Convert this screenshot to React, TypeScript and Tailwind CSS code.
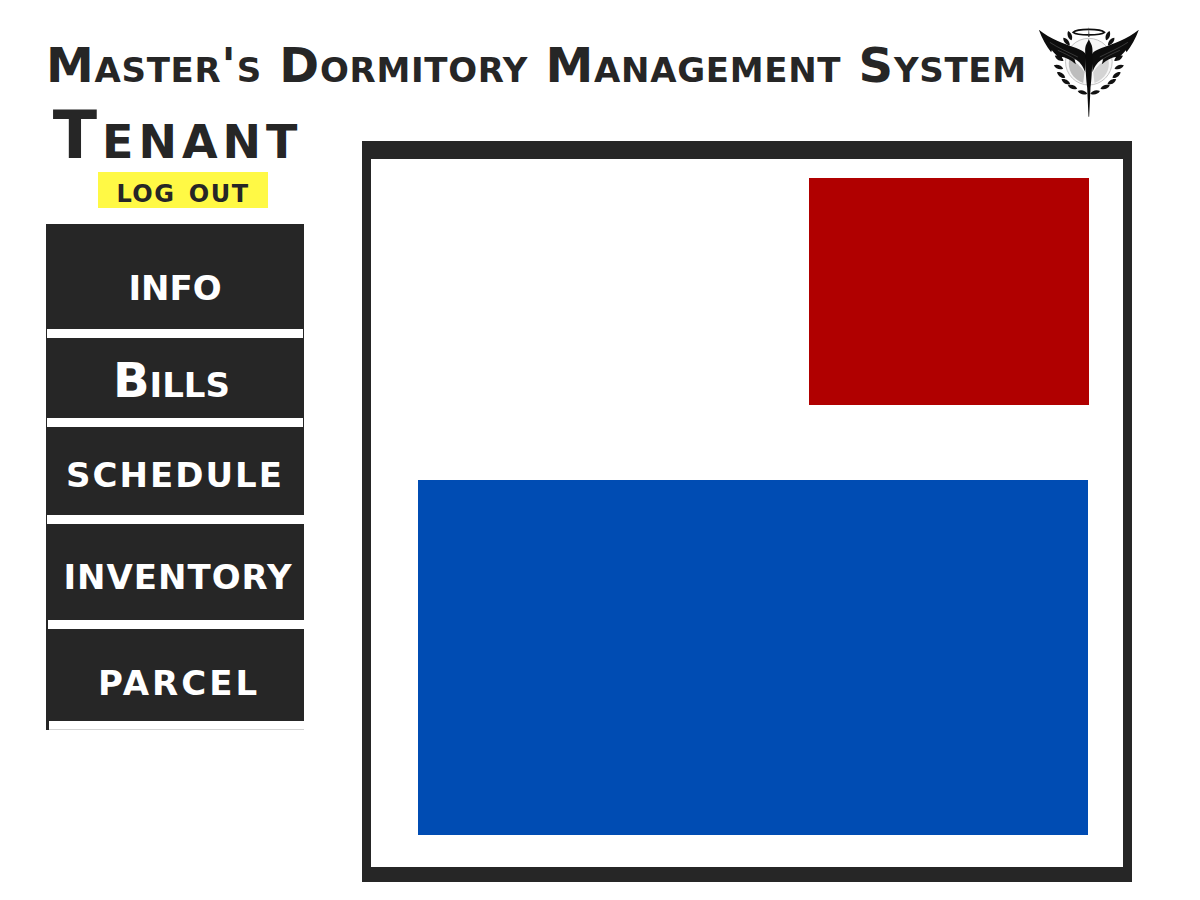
const navItems = [
  { label: 'info', box: 'h-[105px] pt-[12px]', gap: 'ml-[1px] mr-[1px]' },
  { label: 'Bills', box: 'h-[80px] pt-[3px] pr-[7px]', gap: 'ml-[1px] mr-[1px]' },
  { label: 'schedule', box: 'h-[88px] pb-[2px] tracking-[2px]', gap: 'ml-[1px]' },
  { label: 'inventory', box: 'h-[96px] pl-[6px] tracking-[1px]', gap: 'ml-[2px]' },
  { label: 'parcel', box: 'h-[92px] pt-[6px] pl-[8px] tracking-[3px]', gap: 'ml-[3px] border-b border-[#d4d4d4]' },
];

// x, y, rotation of each laurel leaf on the left side
const leaves = [
  [148, 62, -20],
  [138, 80, -40],
  [116, 130, -60],
  [114, 156, -70],
  [122, 180, -55],
  [136, 200, -60],
  [156, 216, -70],
  [186, 232, -75],
];

const LeftHalf = () => (
  <g>
    {leaves.map(([x, y, r]) => (
      <path
        key={`${x}-${y}`}
        d="M0 -15C8 -7 8 7 0 15C-8 7 -8 -7 0 -15Z"
        fill="#111"
        transform={`translate(${x} ${y}) rotate(${r})`}
      />
    ))}
    <path
      d="M55 44C90 72 130 86 165 98C180 104 192 108 197 120L194 172C188 152 176 138 162 132L166 148C150 134 138 128 124 126L126 136C112 126 102 116 94 106L92 112C78 94 64 70 55 44Z"
      fill="#0d0d0d"
    />
    <path d="M88 82C112 98 140 110 172 126M112 106C130 114 148 122 166 134" fill="none" stroke="#666" strokeWidth="1.5" />
  </g>
);

const Logo = () => (
  <svg viewBox="50 30 305 276" className="h-[92px] w-[102px] shrink-0 mt-[-2px]">
    <circle cx="205" cy="140" r="70" fill="#f7f7f7" stroke="#c4c4c4" strokeWidth="3" />
    <path d="M146 134C140 162 156 192 188 204L192 172C182 154 164 138 146 134Z" fill="#bdbdbd" />
    <path d="M264 134C270 162 254 192 222 204L218 172C228 154 246 138 264 134Z" fill="#d4d4d4" />
    <path d="M158 52C170 40 240 40 252 52C240 62 170 62 158 52Z" fill="none" stroke="#0d0d0d" strokeWidth="5" />
    <path d="M205 34L207 66H203Z" fill="#333" />
    <LeftHalf />
    <g transform="matrix(-1 0 0 1 410 0)">
      <LeftHalf />
    </g>
    <path
      d="M205 72C209 84 217 90 216 108C216 140 214 190 210 218L206 305H204L200 218C196 190 194 140 194 108C193 90 201 84 205 72Z"
      fill="#0a0a0a"
    />
  </svg>
);

export default function App() {
  return (
    <div className="w-[1200px] h-[900px] bg-white font-['DejaVu_Sans',sans-serif] font-bold [font-variant-caps:small-caps] text-[#262626] overflow-hidden">
      <header className="flex items-start h-[105px] pl-[46px] pt-[27px]">
        <h1 className="w-[991px] text-[48px] leading-[76px] tracking-[0.7px] whitespace-nowrap">
          Master's Dormitory Management System
        </h1>
        <Logo />
      </header>

      <div className="flex pl-[46px]">
        <aside className="w-[258px]">
          <h2 className="h-[67px] pl-[5px] text-center text-[65px] leading-[62px] tracking-[5px]">Tenant</h2>
          <div className="flex justify-center pl-[16px]">
            <a className="flex items-center justify-center w-[170px] h-[36px] bg-[#fff945] text-[34px] leading-none tracking-[1.5px]">
              log out
            </a>
          </div>
          <nav className="mt-[16px] flex flex-col bg-[#262626]">
            {navItems.map((item) => (
              <div key={item.label} className="flex flex-col">
                <a className={`flex items-center justify-center text-white text-[48px] leading-none ${item.box}`}>
                  {item.label}
                </a>
                <div className={`h-[9px] bg-white ${item.gap}`} />
              </div>
            ))}
          </nav>
        </aside>

        <main className="ml-[58px] mt-[36px] w-[770px] h-[741px] border-solid border-[#262626] border-t-[18px] border-l-[9px] border-r-[9px] border-b-[15px] flex flex-col">
          <div className="self-end mt-[19px] mr-[34px] w-[280px] h-[227px] bg-[#b00000]" />
          <div className="ml-[47px] mt-[75px] w-[670px] h-[355px] bg-[#004cb3]" />
        </main>
      </div>
    </div>
  );
}
